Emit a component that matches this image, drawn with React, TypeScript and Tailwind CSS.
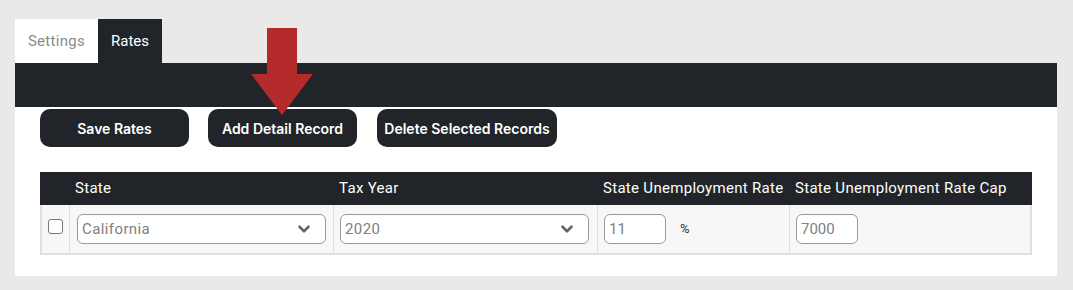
import { ChevronDown } from 'lucide-react'

const body = { fontFamily: 'Roboto, "Noto Sans", sans-serif' }
const ui = { fontFamily: 'Inter, "Noto Sans", sans-serif' }

function ActionButton({ label, className = '' }: { label: string; className?: string }) {
  return (
    <button
      style={ui}
      className={`h-[38px] rounded-[10px] bg-[#212529] text-[14px] font-semibold text-white ${className}`}
    >
      {label}
    </button>
  )
}

function SelectBox({ value }: { value: string }) {
  return (
    <div className="flex h-[30px] w-[249px] items-center justify-between rounded-[6px] border border-[#9a9a9a] bg-white pl-[4px] pr-[12px]">
      <span className="text-[15px] tracking-[0.4px] text-[#808080]">{value}</span>
      <ChevronDown className="h-[18px] w-[18px] text-[#666]" strokeWidth={3.5} />
    </div>
  )
}

function TextBox({ value }: { value: string }) {
  return (
    <div className="flex h-[30px] w-[62px] items-center rounded-[6px] border border-[#9a9a9a] bg-white pl-[4px] text-[15px] text-[#808080]">
      {value}
    </div>
  )
}

export default function App() {
  return (
    <div style={body} className="relative h-[290px] w-[1073px] bg-[#e9e9e9] pt-[19px] pl-[15px]">
      {/* tabs */}
      <div className="flex h-[44px] w-[1042px] text-[15px]">
        <div className="flex w-[83px] items-center justify-center bg-white tracking-[0.3px] text-[#8a8a8a]">Settings</div>
        <div className="flex w-[64px] items-center justify-center bg-[#212529] text-white">Rates</div>
      </div>
      <div className="h-[44px] w-[1042px] bg-[#212529]" />

      <div className="h-[169px] w-[1042px] bg-white pt-[2px] pl-[25px]">
        <div className="flex">
          <ActionButton label="Save Rates" className="w-[149px]" />
          <ActionButton label="Add Detail Record" className="ml-[19px] w-[149px]" />
          <ActionButton label="Delete Selected Records" className="ml-[20px] w-[180px]" />
        </div>

        {/* rates table */}
        <div className="mt-[25px] w-[992px]">
          <div className="grid h-[33px] grid-cols-[28px_264px_264px_192px_244px] items-center whitespace-nowrap bg-[#212529] text-[15px] tracking-[0.3px] text-white">
            <div />
            <div className="pl-[7px]">State</div>
            <div className="pl-[7px]">Tax Year</div>
            <div className="pl-[7px]">State Unemployment Rate</div>
            <div className="pl-[7px]">State Unemployment Rate Cap</div>
          </div>
          <div className="grid h-[50px] grid-cols-[28px_264px_264px_192px_244px] border-2 border-t-0 border-[#dedede] bg-[#f7f7f7]">
            <div className="flex items-center justify-center border-r border-[#dedede] pb-[6px]">
              <div className="h-[15px] w-[15px] rounded-[3px] border border-[#777] bg-white" />
            </div>
            <div className="flex items-center border-r border-[#dedede] pl-[7px]">
              <SelectBox value="California" />
            </div>
            <div className="flex items-center border-r border-[#dedede] pl-[6px]">
              <SelectBox value="2020" />
            </div>
            <div className="flex items-center gap-[14px] border-r border-[#dedede] pl-[6px]">
              <TextBox value="11" />
              <span className="text-[13px] text-[#333]">%</span>
            </div>
            <div className="flex items-center pl-[6px]">
              <TextBox value="7000" />
            </div>
          </div>
        </div>
      </div>

      {/* red pointer arrow */}
      <svg className="absolute left-[251px] top-[28px]" width="62" height="87" viewBox="0 0 62 87">
        <path d="M16 0 H46 V46 H62 L31 87 L0 46 H16 Z" fill="#b52a2a" />
      </svg>
    </div>
  )
}
